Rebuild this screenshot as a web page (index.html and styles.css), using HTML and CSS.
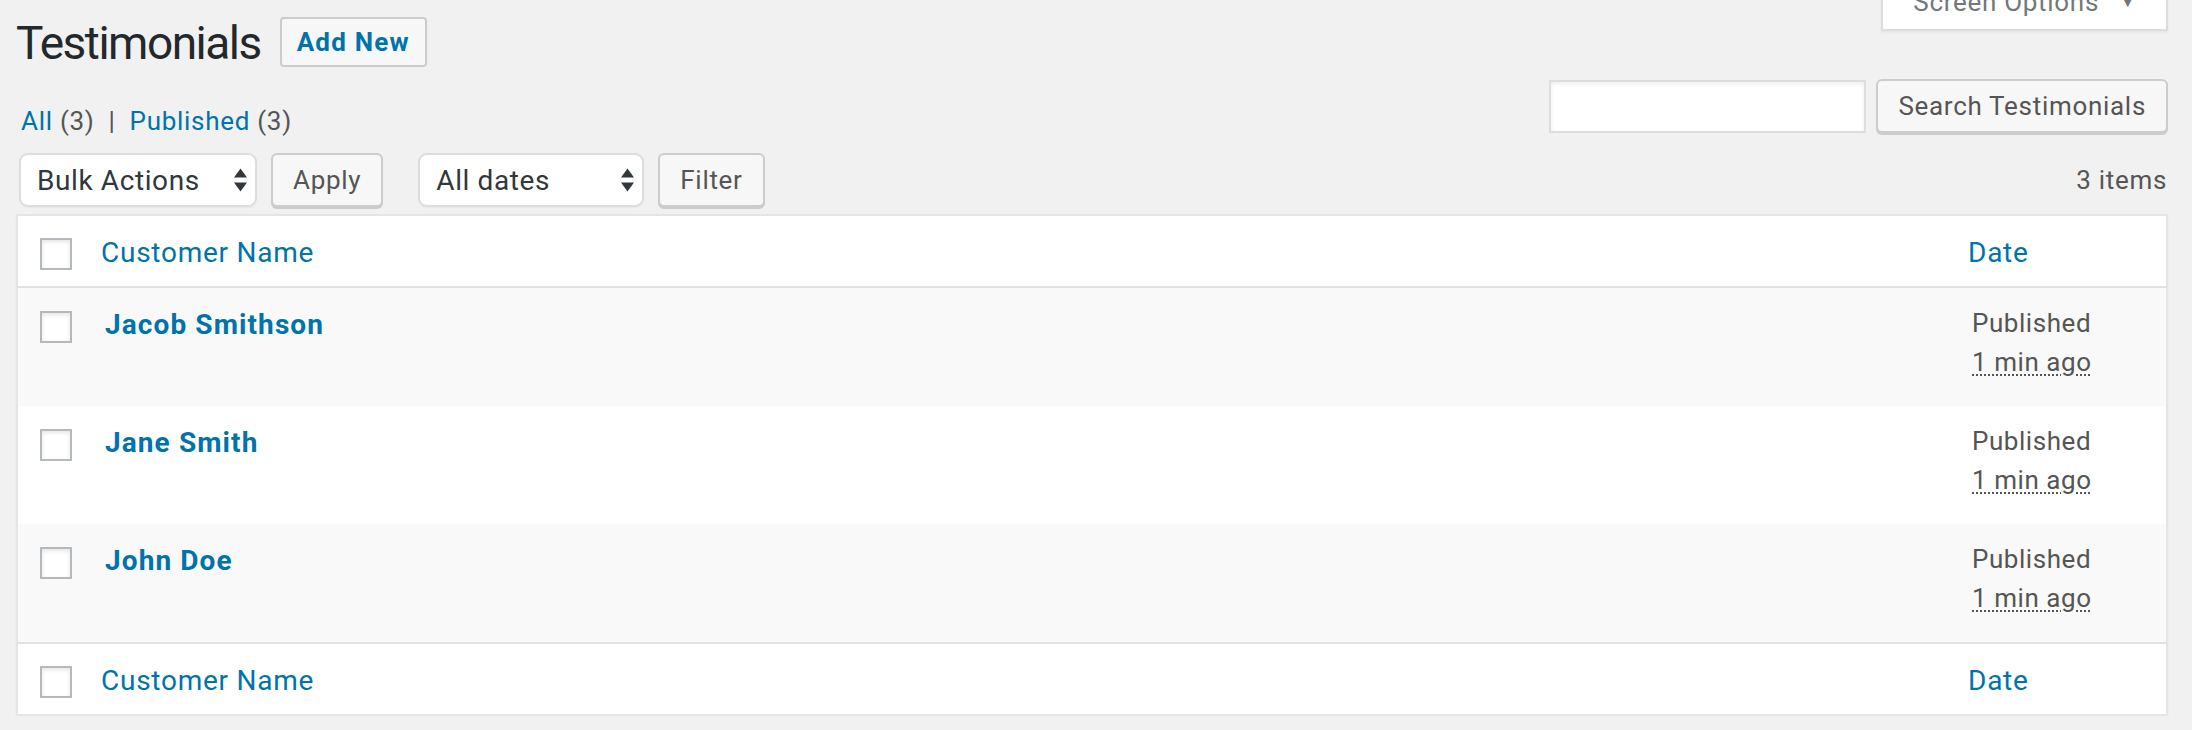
FILE: index.html
```html
<!DOCTYPE html>
<html lang="en">
<head>
<meta charset="utf-8">
<title>Testimonials</title>
<link rel="stylesheet" href="styles.css">
</head>
<body>
<div class="wrap">
  <div class="title-row">
    <h1 class="page-title">Testimonials</h1>
    <a class="add-new" href="#">Add New</a>
    <button class="screen-tab" type="button">Screen Options <span class="caret">&#9660;</span></button>
  </div>

  <div class="filters-row">
    <ul class="subsubsub">
      <li><a href="#" class="cur">All</a> <span class="count">(3)</span></li>
      <li class="sep">|</li>
      <li><a href="#">Published</a> <span class="count">(3)</span></li>
    </ul>
    <div class="search-box">
      <input class="search-input" type="search" aria-label="Search">
      <button class="button" type="button">Search Testimonials</button>
    </div>
  </div>

  <div class="tablenav">
    <div class="actions">
      <div class="select select-bulk">
        <span>Bulk Actions</span>
        <svg class="arrows" width="13" height="24" viewBox="0 0 13 24"><polygon points="0,9.5 6.5,0.5 13,9.5" fill="#32373c"/><polygon points="0,14.5 13,14.5 6.5,23.5" fill="#32373c"/></svg>
      </div>
      <button class="button" type="button">Apply</button>
    </div>
    <div class="actions">
      <div class="select select-dates">
        <span>All dates</span>
        <svg class="arrows" width="13" height="24" viewBox="0 0 13 24"><polygon points="0,9.5 6.5,0.5 13,9.5" fill="#32373c"/><polygon points="0,14.5 13,14.5 6.5,23.5" fill="#32373c"/></svg>
      </div>
      <button class="button" type="button">Filter</button>
    </div>
    <div class="items-count">3 items</div>
  </div>

  <table class="list-table">
    <colgroup>
      <col class="col-cb">
      <col>
      <col class="col-date">
    </colgroup>
    <thead>
      <tr>
        <th class="check"><span class="cb"></span></th>
        <th class="head"><a href="#">Customer Name</a></th>
        <th class="head"><a href="#">Date</a></th>
      </tr>
    </thead>
    <tbody>
      <tr class="alt">
        <th class="check"><span class="cb"></span></th>
        <td class="name"><a href="#">Jacob Smithson</a></td>
        <td class="date">Published<br><abbr title="">1 min ago</abbr></td>
      </tr>
      <tr>
        <th class="check"><span class="cb"></span></th>
        <td class="name"><a href="#">Jane Smith</a></td>
        <td class="date">Published<br><abbr title="">1 min ago</abbr></td>
      </tr>
      <tr class="alt">
        <th class="check"><span class="cb"></span></th>
        <td class="name"><a href="#">John Doe</a></td>
        <td class="date">Published<br><abbr title="">1 min ago</abbr></td>
      </tr>
    </tbody>
    <tfoot>
      <tr>
        <th class="check"><span class="cb"></span></th>
        <th class="head"><a href="#">Customer Name</a></th>
        <th class="head"><a href="#">Date</a></th>
      </tr>
    </tfoot>
  </table>
</div>
</body>
</html>
```

FILE: styles.css
```css
* { box-sizing: border-box; }

html, body {
  margin: 0;
  padding: 0;
  background: #f1f1f1;
}

body {
  font-family: Roboto, "Liberation Sans", sans-serif;
  color: #444;
  font-size: 26px;
  letter-spacing: 0.7px;
  overflow: hidden;
}

a { color: #0073aa; text-decoration: none; }

.wrap {
  margin: 0 24px 0 16px;
}

/* title row */
.title-row {
  display: flex;
  align-items: flex-start;
}

.page-title {
  margin: 0;
  padding: 14px 0 0 0;
  font-size: 46px;
  line-height: 58px;
  font-weight: 400;
  letter-spacing: -1.5px;
  color: #23282d;
}

.add-new {
  margin: 17px 0 0 19px;
  height: 50px;
  line-height: 46px;
  padding: 0 15px;
  border: 2px solid #ccc;
  border-radius: 4px;
  background: #f7f7f7;
  font-size: 26px;
  font-weight: 700;
  letter-spacing: 1.2px;
  color: #0073aa;
}

.screen-tab {
  margin: -25px 0 0 auto;
  width: 287px;
  height: 56px;
  padding: 0;
  border: 2px solid #ddd;
  border-top: none;
  background: #fff;
  box-shadow: 0 2px 2px rgba(0,0,0,0.04);
  font-family: inherit;
  font-size: 26px;
  letter-spacing: 0.7px;
  color: #72777c;
  line-height: 30px;
  text-align: center;
}

.screen-tab .caret {
  font-size: 15px;
  margin-left: 14px;
  vertical-align: 4px;
}

/* filters row */
.filters-row {
  display: flex;
  justify-content: space-between;
  align-items: flex-start;
}

.subsubsub {
  list-style: none;
  margin: 33px 0 0 5px;
  padding: 0;
  display: flex;
  font-size: 26px;
  line-height: 32px;
  color: #555;
}

.subsubsub li { white-space: pre; }
.subsubsub .sep { margin: 0 14px; color: #555; }
.subsubsub .count { color: #555; }

.search-box {
  display: flex;
  align-items: flex-start;
  gap: 10px;
  margin-top: 7px;
}

.search-input {
  margin-top: 1px;
  width: 317px;
  height: 53px;
  border: 2px solid #ddd;
  background: #fff;
  box-shadow: inset 0 2px 4px rgba(0,0,0,0.07);
  padding: 0 10px;
  font-family: inherit;
  font-size: 26px;
  outline: none;
}

.button {
  height: 54px;
  padding: 0 20px;
  border: 2px solid #ccc;
  border-radius: 6px;
  background: #f7f7f7;
  box-shadow: 0 2px 0 #ccc;
  color: #555;
  font-family: inherit;
  font-size: 26px;
  letter-spacing: 0.7px;
  line-height: 50px;
  white-space: nowrap;
}

/* tablenav */
.tablenav {
  display: flex;
  align-items: center;
  padding: 16px 0 0 3px;
  height: 70px;
}

.actions {
  display: flex;
  align-items: center;
  gap: 14px;
  margin-right: 35px;
}

.select {
  height: 54px;
  display: flex;
  align-items: center;
  justify-content: space-between;
  border: 2px solid #ddd;
  border-radius: 9px;
  background: #fff;
  box-shadow: 0 1px 2px rgba(0,0,0,0.04);
  padding: 0 8px 0 16px;
  font-size: 28px;
  letter-spacing: 0.6px;
  color: #32373c;
}

.select-bulk { width: 238px; }
.select-dates { width: 226px; }

.arrows { display: block; }

.items-count {
  margin-left: auto;
  line-height: 54px;
  color: #555;
  font-size: 26px;
  padding-right: 1px;
}

/* table */
.list-table {
  margin-top: 7px;
  width: 100%;
  table-layout: fixed;
  border-collapse: separate;
  border-spacing: 0;
  background: #fff;
  border: 2px solid #e5e5e5;
  box-shadow: 0 2px 2px rgba(0,0,0,0.04);
}

.col-cb { width: 67px; }
.col-date { width: 214px; }

.list-table th,
.list-table td {
  text-align: left;
  vertical-align: top;
  padding: 0;
  font-weight: 400;
}

.list-table thead tr { height: 72px; }
.list-table tfoot tr { height: 72px; }
.list-table tbody tr { height: 118px; }

.list-table thead th { border-bottom: 2px solid #e1e1e1; }
.list-table tfoot th { border-top: 2px solid #e1e1e1; }

.list-table tr.alt { background: #f9f9f9; }

.check { padding: 22px 0 0 22px !important; }
tbody .check { padding-top: 23px !important; }

.cb {
  display: block;
  width: 32px;
  height: 32px;
  border: 2px solid #b4b9be;
  background: #fff;
  box-shadow: inset 0 2px 4px rgba(0,0,0,0.1);
}

.head {
  padding: 17px 16px 0 16px !important;
  font-size: 28px;
  letter-spacing: 0.75px;
  line-height: 40px;
}

.name {
  padding: 16px 20px 0 20px !important;
  font-size: 28px;
  line-height: 42px;
  font-weight: 700;
  letter-spacing: 1.1px;
}

.name a { font-weight: 700; }

.date {
  padding: 16px 20px 0 20px !important;
  font-size: 26px;
  line-height: 39px;
  letter-spacing: 0.55px;
  color: #555;
}

abbr {
  text-decoration: underline dotted #555;
  text-decoration-thickness: 2px;
  text-underline-offset: 3px;
}
```
